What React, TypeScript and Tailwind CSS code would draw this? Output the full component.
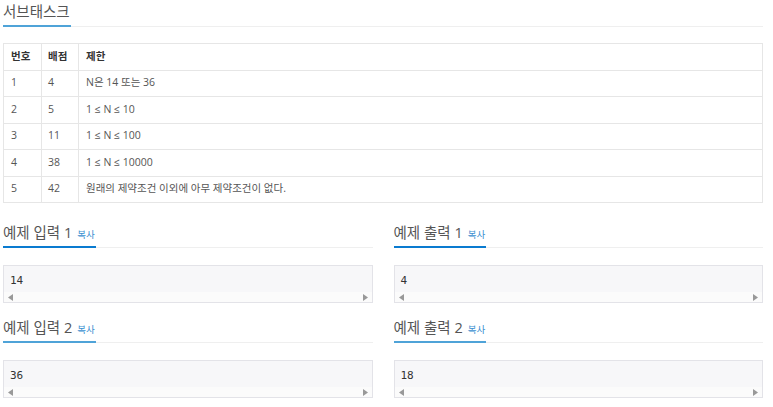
const font = "font-['Open_Sans','Noto_Sans_CJK_KR',sans-serif]";

const rows = [
  ['1', '4', 'N은 14 또는 36'],
  ['2', '5', '1 ≤ N ≤ 10'],
  ['3', '11', '1 ≤ N ≤ 100'],
  ['4', '38', '1 ≤ N ≤ 10000'],
  ['5', '42', '원래의 제약조건 이외에 아무 제약조건이 없다.'],
];

function Headline({ title, copy, strong }: { title: string; copy?: boolean; strong?: boolean }) {
  return (
    <div className="flex items-end border-b border-[#efefef]">
      <div
        className={`-mb-px flex items-baseline gap-[5px] border-b-2 pb-[4px] pr-[1px] ${strong ? 'border-[#0a7bd0]' : 'border-[#4fa3d8]'}`}
      >
        <span className="text-[14.5px] leading-[18px] text-[#555]">{title}</span>
        {copy && <span className="text-[9.5px] leading-[12px] text-[#3a8fd0]">복사</span>}
      </div>
    </div>
  );
}

function Sample({ title, value, strong }: { title: string; value: string; strong?: boolean }) {
  return (
    <div className="flex flex-col">
      <Headline title={title} copy strong={strong} />
      <div className="mt-[17px] border border-[#e3e3e8] bg-[#f7f7f9]">
        <div className="h-[26px] pl-[6px] pt-[8px] font-['DejaVu_Sans_Mono',monospace] text-[11px] leading-[14px] text-[#333]">
          {value}
        </div>
        <div className="flex h-[10px] items-center justify-between bg-[#fbfbfb] px-[4px]">
          <svg width="5" height="7" viewBox="0 0 5 7">
            <path d="M5 0 L0 3.5 L5 7 Z" fill="#999" />
          </svg>
          <svg width="5" height="7" viewBox="0 0 5 7">
            <path d="M0 0 L5 3.5 L0 7 Z" fill="#999" />
          </svg>
        </div>
      </div>
    </div>
  );
}

export default function App() {
  return (
    <div className={`${font} w-[773px] bg-white px-[3px] pt-[3px] text-[#333]`}>
      <div className="w-[760px]">
        <Headline title="서브태스크" />
        <table className="mt-[16px] w-full border-collapse border border-[#e6e6e6] text-[10.5px]">
          <thead>
            <tr>
              <th className="h-[26.5px] w-[38px] border border-[#e6e6e6] pl-[7px] text-left font-bold">번호</th>
              <th className="h-[26.5px] w-[37px] border border-[#e6e6e6] pl-[6px] text-left font-bold">배점</th>
              <th className="h-[26.5px] border border-[#e6e6e6] pl-[7px] text-left font-bold">제한</th>
            </tr>
          </thead>
          <tbody>
            {rows.map((r) => (
              <tr key={r[0]}>
                <td className="h-[26.5px] border border-[#e6e6e6] pl-[7px] text-[#555]">{r[0]}</td>
                <td className="h-[26.5px] border border-[#e6e6e6] pl-[6px] text-[#555]">{r[1]}</td>
                <td className="h-[26.5px] border border-[#e6e6e6] pl-[7px] text-[#555]">{r[2]}</td>
              </tr>
            ))}
          </tbody>
        </table>
        <div className="mt-[21px] grid grid-cols-2 gap-x-[21px] gap-y-[16px]">
          <Sample title="예제 입력 1" value="14" strong />
          <Sample title="예제 출력 1" value="4" strong />
          <Sample title="예제 입력 2" value="36" />
          <Sample title="예제 출력 2" value="18" />
        </div>
      </div>
    </div>
  );
}
